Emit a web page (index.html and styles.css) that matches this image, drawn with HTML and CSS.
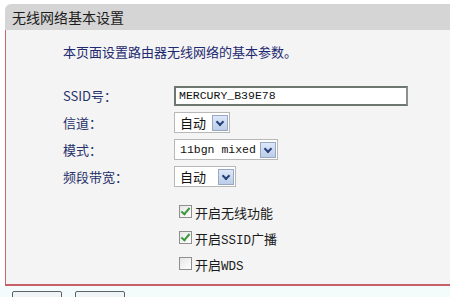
FILE: index.html
```html
<!DOCTYPE html>
<html lang="zh-CN">

<head>
  <meta charset="UTF-8">
  <title>无线网络基本设置</title>
  <link rel="stylesheet" href="styles.css">
</head>

<body>
  <div class="page">
    <div class="head">无线网络基本设置</div>
    <div class="box">
      <p class="intro">本页面设置路由器无线网络的基本参数。</p>
      <div class="form">
        <label class="name">SSID号：</label>
        <div class="field"><span class="input">MERCURY_B39E78</span></div>

        <label class="name">信道：</label>
        <div class="field">
          <span class="select"><span class="val cn">自动</span><span class="arrow"></span></span>
        </div>

        <label class="name">模式：</label>
        <div class="field">
          <span class="select"><span class="val">11bgn mixed</span><span class="arrow"></span></span>
        </div>

        <label class="name">频段带宽：</label>
        <div class="field">
          <span class="select"><span class="val cn wide">自动</span><span class="arrow"></span></span>
        </div>

        <div class="checks">
          <div class="check"><span class="cb on"></span>开启无线功能</div>
          <div class="check"><span class="cb on"></span>开启<span class="lat">SSID</span>广播</div>
          <div class="check"><span class="cb"></span>开启<span class="lat">WDS</span></div>
        </div>
      </div>
    </div>
    <div class="foot">
      <span class="btn"></span>
      <span class="btn"></span>
    </div>
  </div>
</body>

</html>
```

FILE: styles.css
```css
body {
  margin: 0;
  background: #ffffff;
  font-family: "Noto Sans CJK SC", "Liberation Sans", sans-serif;
  color: #222;
}

.page {
  width: 450px;
  height: 297px;
  overflow: hidden;
  padding-top: 4px;
  box-sizing: border-box;
}

.head {
  margin-left: 5px;
  height: 26px;
  line-height: 26px;
  padding-left: 7px;
  background-color: #d5d5d5;
  border-top-left-radius: 6px;
  font-size: 14px;
  color: #1c1c1c;
}

.box {
  margin-left: 5px;
  height: 256px;
  box-sizing: border-box;
  background-color: #f4f4f4;
  border-left: 1px solid #c46a6a;
  border-bottom: 2px solid #c8606a;
  padding-top: 12px;
  padding-left: 57px;
}

.intro {
  margin: 0;
  font-size: 13px;
  line-height: 20px;
  color: #1e2a70;
}

.form {
  display: grid;
  grid-template-columns: 111px auto;
  grid-auto-rows: 27px;
  align-items: center;
  margin-top: 20px;
}

.name {
  font-size: 13px;
  color: #26306a;
}

.field {
  display: flex;
}

.input {
  width: 227px;
  height: 16px;
  line-height: 16px;
  border: 2px solid #6e7670;
  border-right-color: #8a918c;
  background: #fff;
  padding-left: 3px;
  font-family: "Liberation Mono", monospace;
  font-size: 11.5px;
  color: #111;
}

.select {
  display: flex;
  align-items: center;
  height: 19px;
  border: 1px solid #b8b8b8;
  background: #fff;
  padding: 0 1px 0 5px;
}

.val {
  font-family: "Liberation Mono", monospace;
  font-size: 11.5px;
  color: #111;
  padding-right: 4px;
}

.val.cn {
  font-family: "Noto Sans CJK SC", sans-serif;
  font-size: 13px;
  padding-right: 6px;
}

.val.wide {
  padding-right: 12px;
}

.arrow {
  width: 16px;
  height: 16px;
  box-sizing: border-box;
  border: 1px solid #98a8c4;
  background: linear-gradient(#dde8f8, #bccde8);
  position: relative;
}

.arrow::after {
  content: "";
  position: absolute;
  left: 4px;
  top: 3px;
  width: 4px;
  height: 4px;
  border-right: 2px solid #25407a;
  border-bottom: 2px solid #25407a;
  transform: rotate(45deg);
}

.checks {
  grid-column: 2;
  grid-row: span 3;
  display: flex;
  flex-direction: column;
  gap: 9px;
  padding-left: 5px;
  padding-top: 13px;
  align-self: start;
}

.check {
  display: flex;
  align-items: baseline;
  height: 17px;
  font-size: 13px;
  color: #1a1a1a;
}

.lat {
  font-family: "Liberation Mono", monospace;
  font-size: 12.5px;
}

.cb {
  align-self: center;
  width: 13px;
  height: 13px;
  box-sizing: border-box;
  border: 1px solid #8e8f8f;
  background: linear-gradient(135deg, #e6e6e6, #ffffff);
  margin-right: 3px;
  position: relative;
}

.cb.on::after {
  content: "";
  position: absolute;
  left: 3px;
  top: 0px;
  width: 3px;
  height: 7px;
  border-right: 2px solid #3a9a3a;
  border-bottom: 2px solid #3a9a3a;
  transform: rotate(40deg);
}

.foot {
  display: flex;
  gap: 13px;
  padding: 5px 0 0 12px;
  background: #f4fbfb;
  height: 20px;
}

.btn {
  width: 48px;
  height: 20px;
  border: 1px solid #5a6468;
  border-radius: 2px;
  background: #f0f4f4;
}
```
